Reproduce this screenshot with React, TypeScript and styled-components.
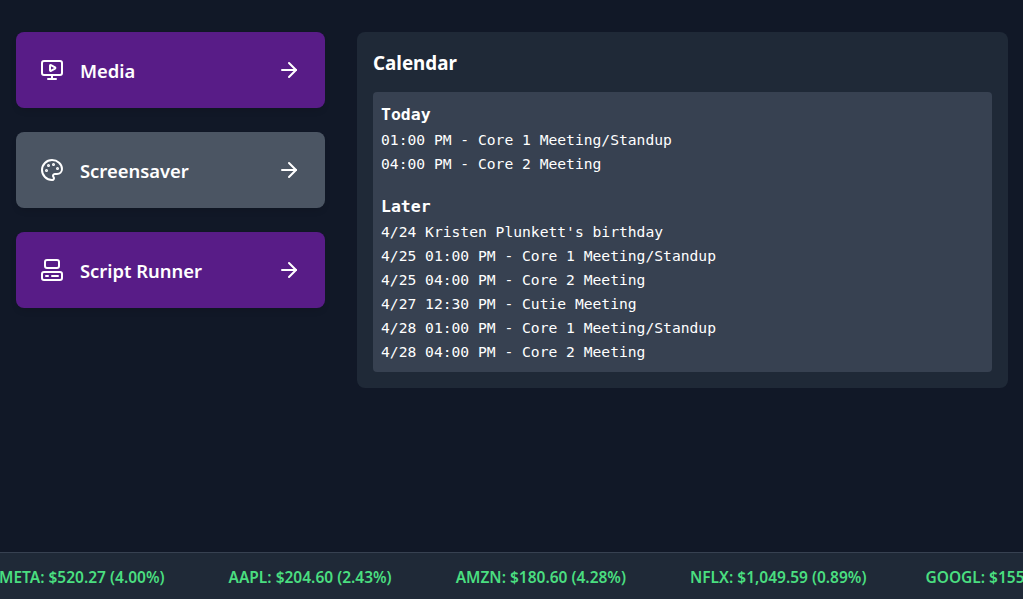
import React from "react";
import styled, { createGlobalStyle } from "styled-components";
import { ArrowRight, Computer, MonitorPlay, Palette } from "lucide-react";

const GlobalStyle = createGlobalStyle`
  html, body {
    margin: 0;
    height: 100%;
    background: #111827;
    overflow: hidden;
  }
  #root {
    height: 100%;
  }
`;

const Page = styled.div`
  height: 599px;
  display: flex;
  flex-direction: column;
  font-family: "Noto Sans", "Open Sans", sans-serif;
  color: #fff;
`;

const Main = styled.main`
  flex: 1;
  display: flex;
  align-items: flex-start;
  gap: 32px;
  padding: 32px 15px 0 16px;
`;

const Menu = styled.nav`
  width: 309px;
  flex-shrink: 0;
  display: flex;
  flex-direction: column;
  gap: 24px;
`;

const MenuCard = styled.a<{ $tone: "purple" | "gray" }>`
  height: 76px;
  box-sizing: border-box;
  padding: 0 24px;
  display: flex;
  align-items: center;
  gap: 16px;
  border-radius: 8px;
  background: ${(p) => (p.$tone === "purple" ? "#581c87" : "#4b5563")};
  box-shadow: 0 4px 6px -1px rgba(0, 0, 0, 0.1);
  font-size: 18.4px;
  font-weight: 600;
`;

const MenuLabel = styled.span`
  flex: 1;
`;

const Panel = styled.section`
  flex: 1;
  padding: 16px;
  border-radius: 8px;
  background: #1f2937;
`;

const PanelTitle = styled.h2`
  margin: 0 0 16px;
  padding-top: 2px;
  font-size: 18.8px;
  line-height: 26px;
  font-weight: 700;
`;

const Agenda = styled.div`
  padding: 8px;
  border-radius: 4px;
  background: #374151;
  font-family: "DejaVu Sans Mono", "Liberation Mono", monospace;
  font-size: 14.65px;
  line-height: 24px;
`;

const AgendaHeading = styled.div<{ $spaced?: boolean }>`
  margin-top: ${(p) => (p.$spaced ? "16px" : "0")};
  padding-top: 2px;
  font-size: 16.5px;
  line-height: 26px;
  font-weight: 700;
`;

const AgendaRow = styled.div`
  white-space: pre;
`;

const Ticker = styled.footer`
  height: 47px;
  box-sizing: border-box;
  padding-top: 2px;
  border-top: 1px solid #374151;
  background: #1f2937;
  display: flex;
  align-items: center;
  overflow: hidden;
  white-space: nowrap;
  font-size: 15.5px;
  font-weight: 600;
  color: #4ade80;
`;

const TickerTrack = styled.div`
  margin-left: -1px;
  display: flex;
  gap: 64px;
`;

const Quote = styled.span`
  flex-shrink: 0;

  &:last-child {
    margin-left: -5px;
  }
`;

const links = [
  { label: "Media", tone: "purple", Icon: MonitorPlay },
  { label: "Screensaver", tone: "gray", Icon: Palette },
  { label: "Script Runner", tone: "purple", Icon: Computer },
] as const;

const today = ["01:00 PM - Core 1 Meeting/Standup", "04:00 PM - Core 2 Meeting"];

const later = [
  "4/24 Kristen Plunkett's birthday",
  "4/25 01:00 PM - Core 1 Meeting/Standup",
  "4/25 04:00 PM - Core 2 Meeting",
  "4/27 12:30 PM - Cutie Meeting",
  "4/28 01:00 PM - Core 1 Meeting/Standup",
  "4/28 04:00 PM - Core 2 Meeting",
];

const quotes = [
  "META: $520.27 (4.00%)",
  "AAPL: $204.60 (2.43%)",
  "AMZN: $180.60 (4.28%)",
  "NFLX: $1,049.59 (0.89%)",
  "GOOGL: $155",
];

export default function App() {
  return (
    <Page>
      <GlobalStyle />
      <Main>
        <Menu>
          {links.map(({ label, tone, Icon }) => (
            <MenuCard key={label} $tone={tone}>
              <Icon size={24} strokeWidth={2} />
              <MenuLabel>{label}</MenuLabel>
              <ArrowRight size={24} strokeWidth={2} />
            </MenuCard>
          ))}
        </Menu>
        <Panel>
          <PanelTitle>Calendar</PanelTitle>
          <Agenda>
            <AgendaHeading>Today</AgendaHeading>
            {today.map((row) => (
              <AgendaRow key={row}>{row}</AgendaRow>
            ))}
            <AgendaHeading $spaced>Later</AgendaHeading>
            {later.map((row) => (
              <AgendaRow key={row}>{row}</AgendaRow>
            ))}
          </Agenda>
        </Panel>
      </Main>
      <Ticker>
        <TickerTrack>
          {quotes.map((quote) => (
            <Quote key={quote}>{quote}</Quote>
          ))}
        </TickerTrack>
      </Ticker>
    </Page>
  );
}
